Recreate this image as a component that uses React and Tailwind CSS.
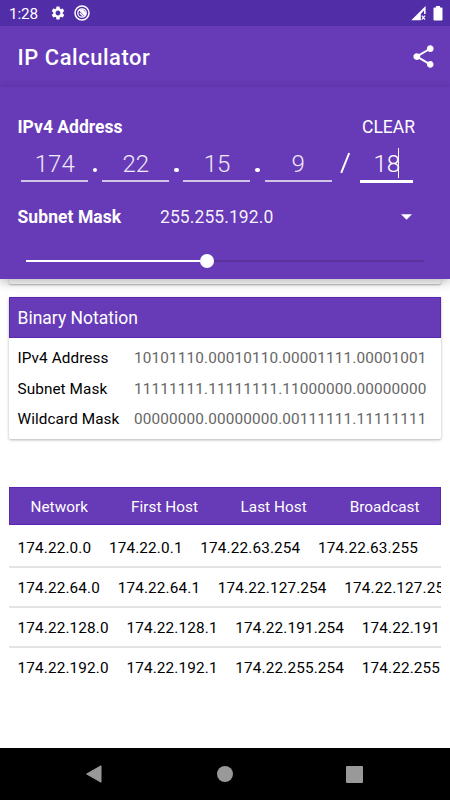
import { useState } from 'react'
import { MdSettings, MdShare } from 'react-icons/md'

const OCTETS = ['174', '22', '15', '9']

const BINARY = [
  { label: 'IPv4 Address',  value: '10101110.00010110.00001111.00001001' },
  { label: 'Subnet Mask',   value: '11111111.11111111.11000000.00000000' },
  { label: 'Wildcard Mask', value: '00000000.00000000.00111111.11111111' },
]

const SUBNETS = [
  ['174.22.0.0',   '174.22.0.1',   '174.22.63.254',  '174.22.63.255'],
  ['174.22.64.0',  '174.22.64.1',  '174.22.127.254', '174.22.127.255'],
  ['174.22.128.0', '174.22.128.1', '174.22.191.254', '174.22.191.255'],
  ['174.22.192.0', '174.22.192.1', '174.22.255.254', '174.22.255.255'],
]

function StatusBar() {
  return (
    <div className="flex h-[26px] shrink-0 items-center bg-[#512da8] pl-[9px] pr-[7px]">
      <span className="w-[41px] text-[15.3px] leading-[26px] tracking-[-0.01em] pt-[2px]">1:28</span>
      <MdSettings className="size-4" />
      <svg className="ml-2 size-4" viewBox="0 0 16 16" fill="none" stroke="currentColor">
        <circle cx="8" cy="8" r="7" strokeWidth="1.5" />
        <circle cx="8" cy="8" r="4.2" strokeWidth="1.3" />
        <path d="M4.8 5.2 L11.2 11.4 L12.2 8 L8.5 4 Z" fill="currentColor" stroke="none" />
        <path d="M5.8 8 L9.4 11.2" strokeWidth="1.3" />
      </svg>
      <svg className="ml-auto h-[15px] w-[15px]" viewBox="0 0 15 15">
        <path d="M0.3 14.3 L14.6 0 V8 H13 V4.5 L9.8 8 V14.3 Z" fill="white" />
        <path d="M10.8 9.7 L14 13.6 M14 9.7 L10.8 13.6" stroke="white" strokeWidth="1.2" />
      </svg>
      <svg className="ml-[7px] h-[15px] w-[10px]" viewBox="0 0 10 15">
        <path d="M3 0 H7 V1.5 H8.6 Q9.5 1.5 9.5 2.4 V13.6 Q9.5 14.5 8.6 14.5 H1.4 Q0.5 14.5 0.5 13.6 V2.4 Q0.5 1.5 1.4 1.5 H3 Z" fill="white" />
      </svg>
    </div>
  )
}

function AddressForm() {
  const [prefix, setPrefix] = useState('18')

  return (
    <div className="relative h-[192px] shrink-0 bg-[#673ab7] pt-[30px] shadow-[0_3px_10px_rgba(0,0,0,0.28)]">
      <div className="flex h-5 items-center justify-between pl-[17.5px] pr-[35px] text-[17.5px]">
        <span className="font-bold">IPv4 Address</span>
        <span>CLEAR</span>
      </div>

      <div className="mt-[9px] flex h-[38px] pl-[21.25px] text-[24px] font-light">
        {OCTETS.map((o, i) => (
          <div key={i} className="flex">
            <div className="flex h-[36px] w-[67px] items-center justify-center border-b-2 border-[#d1c4e9] pt-[1px] text-white/90">
              {o}
            </div>
            {i < 3 && <span className="flex w-[14.1px] items-end justify-center pb-[12px]"><i className="size-[4.4px] rounded-full bg-white" /></span>}
          </div>
        ))}
        <svg className="ml-[8.8px] h-[36px] w-[12px]" viewBox="0 0 12 36">
          <path d="M1.2 26.8 L9.2 7" stroke="white" strokeWidth="2" />
        </svg>
        <label className="relative ml-[8px] flex h-[37px] w-[53px] border-b-[3px] border-white">
          <input
            value={prefix} onChange={e => setPrefix(e.target.value)}
            className="h-[34px] w-full bg-transparent pt-[1px] text-center text-white outline-none"
          />
          <i className="absolute left-[38px] top-[2px] h-[30px] w-px bg-white" />
        </label>
      </div>

      <div className="mt-4 flex h-[34px] items-center pl-[17.5px] text-[17.5px]">
        <span className="w-[142.5px] font-bold tracking-[0.004em]">Subnet Mask</span>
        <span className="tracking-[0.005em] text-white/95">255.255.192.0</span>
        <svg className="ml-auto mr-[38px] h-[6px] w-[11px]" viewBox="0 0 11 6">
          <path d="M0 0.3 H11 L5.5 5.8 Z" fill="white" />
        </svg>
      </div>

      <div className="ml-[26px] mt-5 flex h-[14px] w-[398px] items-center">
        <i className="h-[2px] w-[174px] bg-white" />
        <i className="size-[14px] rounded-full bg-white" />
        <i className="h-[2px] flex-1 bg-[#583399]" />
      </div>
    </div>
  )
}

function BinaryCard() {
  return (
    <div className="h-[142px] rounded-[2px] bg-white shadow-[0_1px_3px_rgba(0,0,0,0.3)]">
      <h2 className="flex h-[41px] items-center border border-[#5a25b0] bg-[#673ab7] px-[7.5px] pt-[2px] text-[17.5px] font-normal text-white">
        Binary Notation
      </h2>
      <div className="pt-[5.5px]">
        {BINARY.map(b => (
          <div key={b.label} className="flex h-[30.4px] items-center pl-[8.5px] text-[15.3px]">
            <span className="w-[116.5px] tracking-[0.006em] text-black">{b.label}</span>
            <span className="tracking-[0.01em] text-[#666]">{b.value}</span>
          </div>
        ))}
      </div>
    </div>
  )
}

function SubnetTable() {
  return (
    <div className="mt-12 overflow-hidden text-[15.3px]">
      <div className="flex h-[38px] items-center border border-[#5a25b0] bg-[#673ab7] pl-[20.5px] pt-[2px] tracking-[0.003em] text-white">
        <span className="w-[100.5px]">Network</span>
        <span className="w-[109.5px]">First Host</span>
        <span className="w-[109.2px]">Last Host</span>
        <span>Broadcast</span>
      </div>
      <div className="pt-[3px]">
        {SUBNETS.map(row => (
          <div key={row[0]} className="flex h-10 items-center gap-[17.6px] border-b-2 border-[#e3e3e3] pl-[8.5px] pt-[2px] tracking-[0.01em] text-black last:border-transparent">
            {row.map(ip => <span key={ip} className="whitespace-nowrap">{ip}</span>)}
          </div>
        ))}
      </div>
    </div>
  )
}

export default function App() {
  return (
    <div className="flex h-[800px] w-[450px] flex-col overflow-hidden bg-white font-['Roboto',sans-serif] text-white">
      <StatusBar />

      <header className="flex h-[61px] shrink-0 items-center justify-between bg-[#673ab7] pl-[17.5px] pr-[13px]">
        <h1 className="pt-1 text-[21.9px] font-medium tracking-[0.026em]">IP Calculator</h1>
        <MdShare className="size-[27px]" />
      </header>

      <AddressForm />

      <main className="flex-1 px-[9px]">
        {/* bottom edge of the scrolled card */}
        <div className="mb-[13px] h-[5px] rounded-b-[2px] bg-white shadow-[0_1px_2px_rgba(0,0,0,0.3)]" />
        <BinaryCard />
        <SubnetTable />
      </main>

      <nav className="flex h-[52px] shrink-0 items-center bg-black pl-[86px] text-[#999]">
        <svg className="h-[18px] w-[16px]" viewBox="0 0 16 18">
          <path d="M0.6 9 L15 0.8 V17.2 Z" fill="currentColor" stroke="currentColor" strokeLinejoin="round" />
        </svg>
        <i className="ml-[115px] size-4 rounded-full bg-[#999]" />
        <i className="ml-[113px] h-[17px] w-[17px] rounded-[1px] bg-[#999]" />
      </nav>
    </div>
  )
}
